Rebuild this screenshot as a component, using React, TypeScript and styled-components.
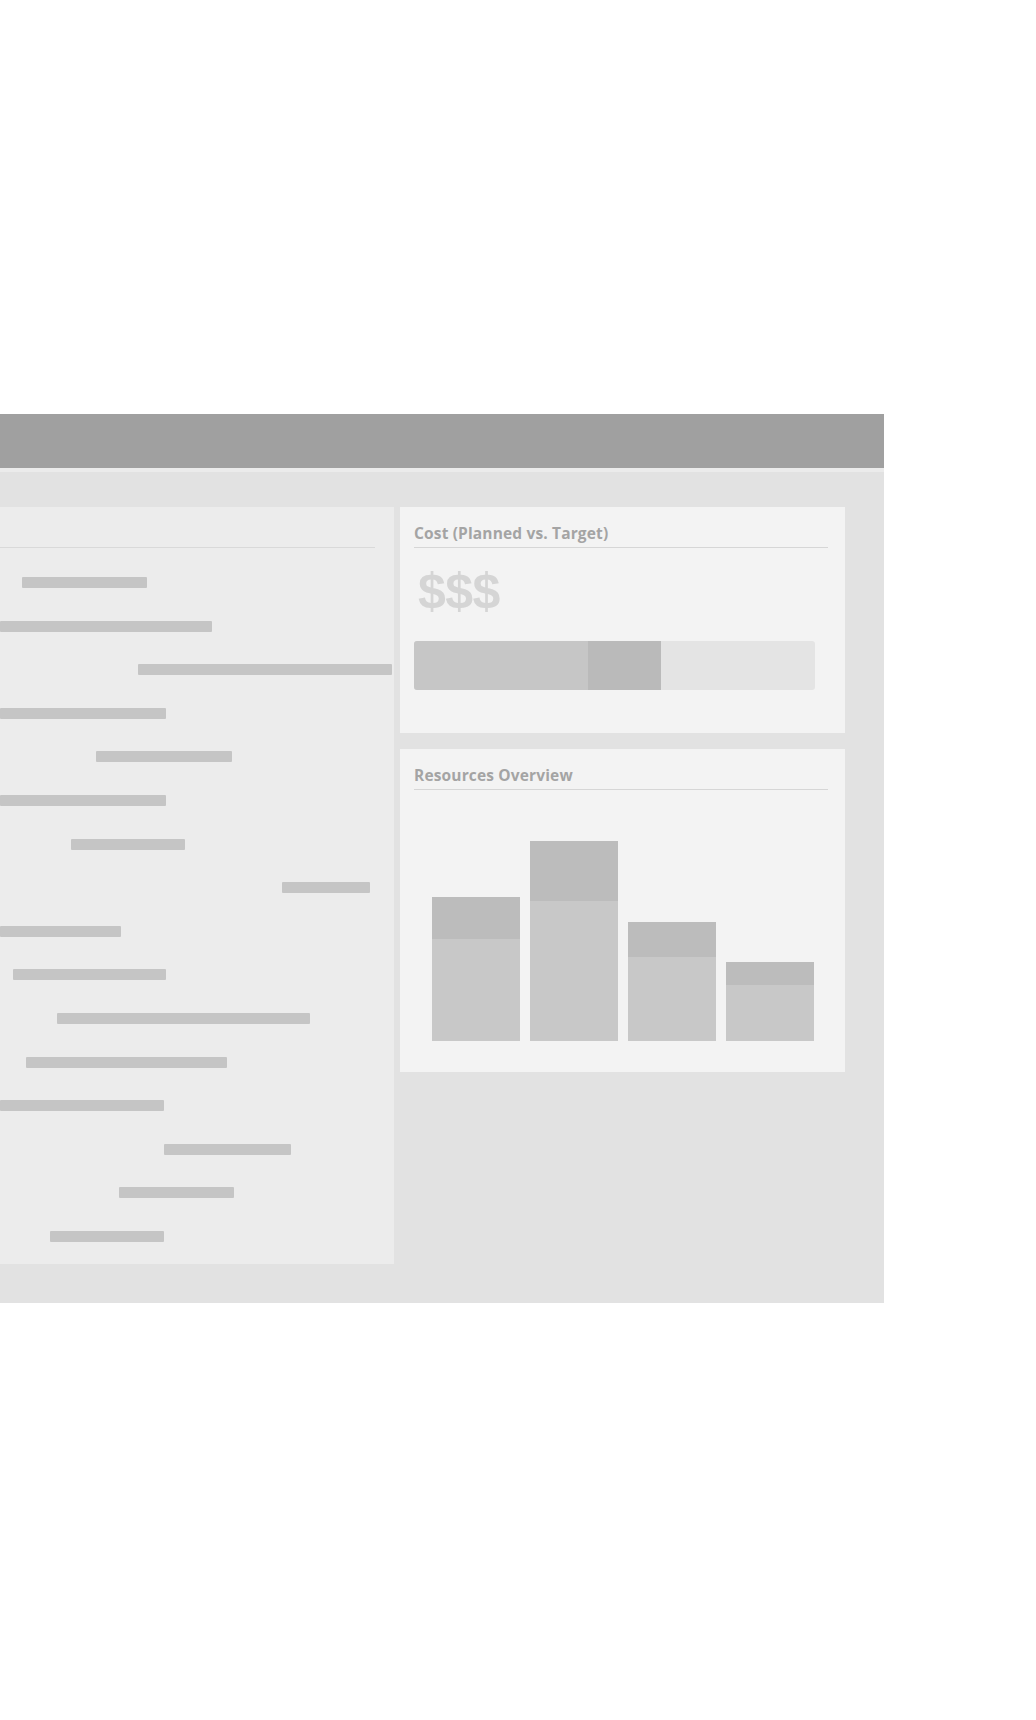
import React from 'react'
import styled, { createGlobalStyle } from 'styled-components'

const GlobalStyle = createGlobalStyle`
  body {
    margin: 0;
    background: #ffffff;
    font-family: "Open Sans", Lato, Arial, sans-serif;
  }
`

const Page = styled.div`
  width: 1036px;
  min-height: 1720px;
  padding-top: 414px;
  box-sizing: border-box;
  background: #ffffff;
`

const Screen = styled.div`
  width: 884px;
  display: flex;
  flex-direction: column;
`

const TopBar = styled.div`
  height: 54px;
  background: #a0a0a0;
  border-bottom: 4px solid #ebebeb;
`

const Main = styled.div`
  display: grid;
  grid-template-columns: 394px 445px;
  column-gap: 6px;
  align-items: start;
  padding: 35px 39px 39px 0;
  background: #e2e2e2;
`

const TimelinePanel = styled.div`
  display: flex;
  flex-direction: column;
  height: 757px;
  background: #ececec;
`

const PanelHead = styled.div`
  width: 375px;
  height: 40px;
  border-bottom: 1px solid #d9d9d9;
`

const BarList = styled.div`
  display: flex;
  flex-direction: column;
  gap: 32.6px;
  padding-top: 29px;
`

const TaskBar = styled.div`
  height: 11px;
  background: #c5c5c5;
  border-radius: 1px;
`

const SideColumn = styled.div`
  display: flex;
  flex-direction: column;
  gap: 16px;
`

const Card = styled.div<{ $height: number }>`
  height: ${(p) => p.$height}px;
  padding: 16px 17px 0 14px;
  box-sizing: border-box;
  background: #f3f3f3;
`

const CardTitle = styled.div`
  font-size: 15.5px;
  font-weight: 700;
  line-height: 21px;
  letter-spacing: 0.15px;
  color: #a4a4a4;
  padding-bottom: 3px;
  border-bottom: 1px solid #d6d6d6;
`

const Amount = styled.div`
  margin-top: 15px;
  padding-left: 4px;
  font-family: "Liberation Sans", Arial, sans-serif;
  font-size: 50px;
  font-weight: 700;
  line-height: 57px;
  letter-spacing: -0.5px;
  color: #d5d5d5;
`

const Progress = styled.div`
  display: flex;
  width: 401px;
  height: 49px;
  margin-top: 21px;
  border-radius: 3px;
  overflow: hidden;
  background: #e4e4e4;
`

const Segment = styled.div<{ $tone: string }>`
  height: 100%;
  background: ${(p) => p.$tone};
`

const Chart = styled.div`
  display: flex;
  align-items: flex-end;
  gap: 10px;
  height: 200px;
  margin: 51px 0 0 18px;
`

const Column = styled.div`
  display: flex;
  flex-direction: column;
  width: 88px;
  background: #c8c8c8;
`

const ColumnTop = styled.div`
  background: #bcbcbc;
`

const tasks = [
  [22, 147],
  [0, 212],
  [138, 392],
  [0, 166],
  [96, 232],
  [0, 166],
  [71, 185],
  [282, 370],
  [0, 121],
  [13, 166],
  [57, 310],
  [26, 227],
  [0, 164],
  [164, 291],
  [119, 234],
  [50, 164],
]

const resources = [
  { total: 144, top: 42 },
  { total: 200, top: 60 },
  { total: 119, top: 35 },
  { total: 79, top: 23 },
]

export default function App() {
  return (
    <Page>
      <GlobalStyle />
      <Screen>
        <TopBar />
        <Main>
          <TimelinePanel>
            <PanelHead />
            <BarList>
              {tasks.map(([start, end], i) => (
                <TaskBar key={i} style={{ marginLeft: start, width: end - start }} />
              ))}
            </BarList>
          </TimelinePanel>

          <SideColumn>
            <Card $height={226}>
              <CardTitle>Cost (Planned vs. Target)</CardTitle>
              <Amount>$$$</Amount>
              <Progress>
                <Segment $tone="#c6c6c6" style={{ width: 174 }} />
                <Segment $tone="#bababa" style={{ width: 73 }} />
              </Progress>
            </Card>

            <Card $height={323}>
              <CardTitle>Resources Overview</CardTitle>
              <Chart>
                {resources.map((r, i) => (
                  <Column key={i} style={{ height: r.total }}>
                    <ColumnTop style={{ height: r.top }} />
                  </Column>
                ))}
              </Chart>
            </Card>
          </SideColumn>
        </Main>
      </Screen>
    </Page>
  )
}
